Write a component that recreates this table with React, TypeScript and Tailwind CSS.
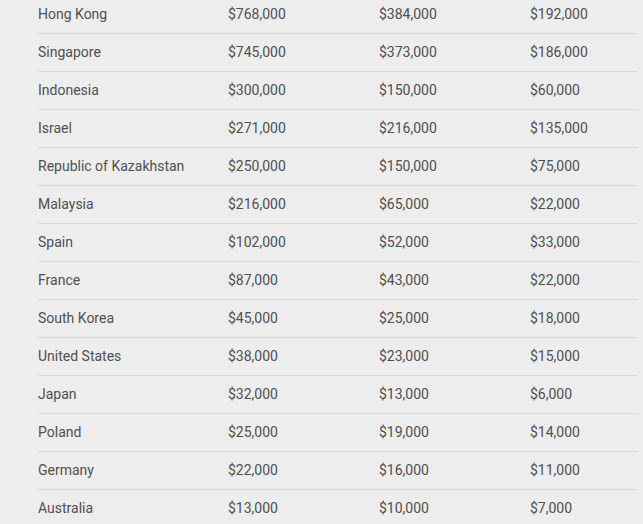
import React from "react";

const rows: [string, string, string, string][] = [
  ["Hong Kong", "$768,000", "$384,000", "$192,000"],
  ["Singapore", "$745,000", "$373,000", "$186,000"],
  ["Indonesia", "$300,000", "$150,000", "$60,000"],
  ["Israel", "$271,000", "$216,000", "$135,000"],
  ["Republic of Kazakhstan", "$250,000", "$150,000", "$75,000"],
  ["Malaysia", "$216,000", "$65,000", "$22,000"],
  ["Spain", "$102,000", "$52,000", "$33,000"],
  ["France", "$87,000", "$43,000", "$22,000"],
  ["South Korea", "$45,000", "$25,000", "$18,000"],
  ["United States", "$38,000", "$23,000", "$15,000"],
  ["Japan", "$32,000", "$13,000", "$6,000"],
  ["Poland", "$25,000", "$19,000", "$14,000"],
  ["Germany", "$22,000", "$16,000", "$11,000"],
  ["Australia", "$13,000", "$10,000", "$7,000"],
];

export default function App() {
  return (
    <div className="w-[643px] h-[524px] overflow-hidden bg-[#ededed] font-['Roboto',sans-serif] text-[14px] text-[#505050]">
      <div className="ml-[38px] mr-[5px] -mt-[4px]">
        {rows.map((r, i) => (
          <div
            key={i}
            className="grid grid-cols-[190px_151px_151px_1fr] h-[38px] pb-[1px] items-center border-b border-[#d9d9d9]"
          >
            {r.map((c, j) => (
              <div key={j} className="leading-none">
                {c}
              </div>
            ))}
          </div>
        ))}
      </div>
    </div>
  );
}
